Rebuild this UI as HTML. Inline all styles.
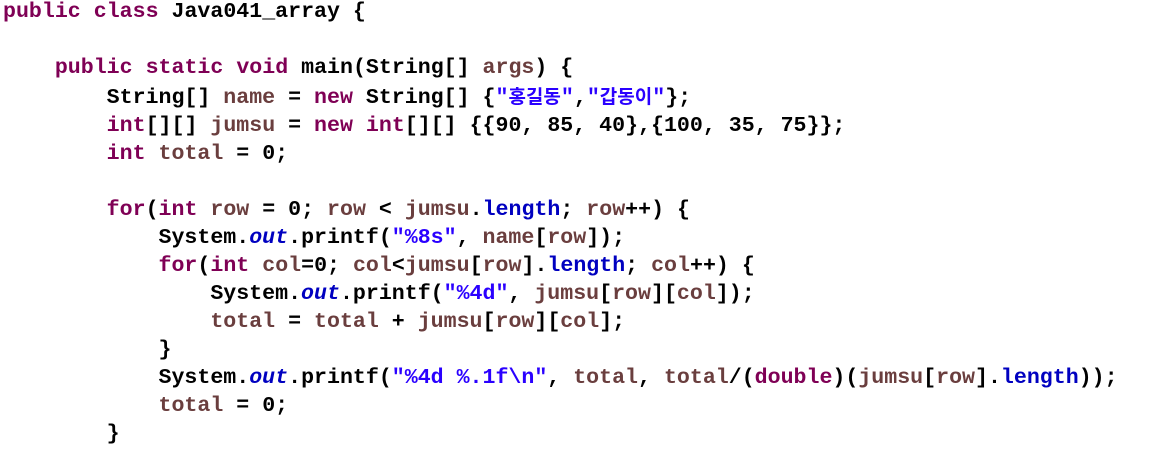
<!DOCTYPE html>
<html><head><meta charset="utf-8"><style>
html,body{margin:0;padding:0;background:#fff;width:1150px;height:451px;overflow:hidden}
pre{margin:0;position:absolute;left:3px;top:-2px;font-family:"Liberation Mono",monospace;font-weight:bold;font-size:21.6px;line-height:28px;color:#000}
.k{color:#7f0055}.v{color:#6a3e3e}.s{color:#2a00ff}.f{color:#0000c0}.i{color:#0000c0;font-style:italic}
.ko{font-family:"Noto Sans CJK KR","NanumGothic",sans-serif;font-size:19px;letter-spacing:0px}
</style></head><body><pre><span class="k">public</span> <span class="k">class</span> Java041_array {

    <span class="k">public</span> <span class="k">static</span> <span class="k">void</span> main(String[] <span class="v">args</span>) {
        String[] <span class="v">name</span> = <span class="k">new</span> String[] {<span class="s">"<span class="ko">홍길동</span>"</span>,<span class="s">"<span class="ko">갑동이</span>"</span>};
        <span class="k">int</span>[][] <span class="v">jumsu</span> = <span class="k">new</span> <span class="k">int</span>[][] {{90, 85, 40},{100, 35, 75}};
        <span class="k">int</span> <span class="v">total</span> = 0;

        <span class="k">for</span>(<span class="k">int</span> <span class="v">row</span> = 0; <span class="v">row</span> &lt; <span class="v">jumsu</span>.<span class="f">length</span>; <span class="v">row</span>++) {
            System.<span class="i">out</span>.printf(<span class="s">"%8s"</span>, <span class="v">name</span>[<span class="v">row</span>]);
            <span class="k">for</span>(<span class="k">int</span> <span class="v">col</span>=0; <span class="v">col</span>&lt;<span class="v">jumsu</span>[<span class="v">row</span>].<span class="f">length</span>; <span class="v">col</span>++) {
                System.<span class="i">out</span>.printf(<span class="s">"%4d"</span>, <span class="v">jumsu</span>[<span class="v">row</span>][<span class="v">col</span>]);
                <span class="v">total</span> = <span class="v">total</span> + <span class="v">jumsu</span>[<span class="v">row</span>][<span class="v">col</span>];
            }
            System.<span class="i">out</span>.printf(<span class="s">"%4d %.1f\n"</span>, <span class="v">total</span>, <span class="v">total</span>/(<span class="k">double</span>)(<span class="v">jumsu</span>[<span class="v">row</span>].<span class="f">length</span>));
            <span class="v">total</span> = 0;
        }
</pre></body></html>
